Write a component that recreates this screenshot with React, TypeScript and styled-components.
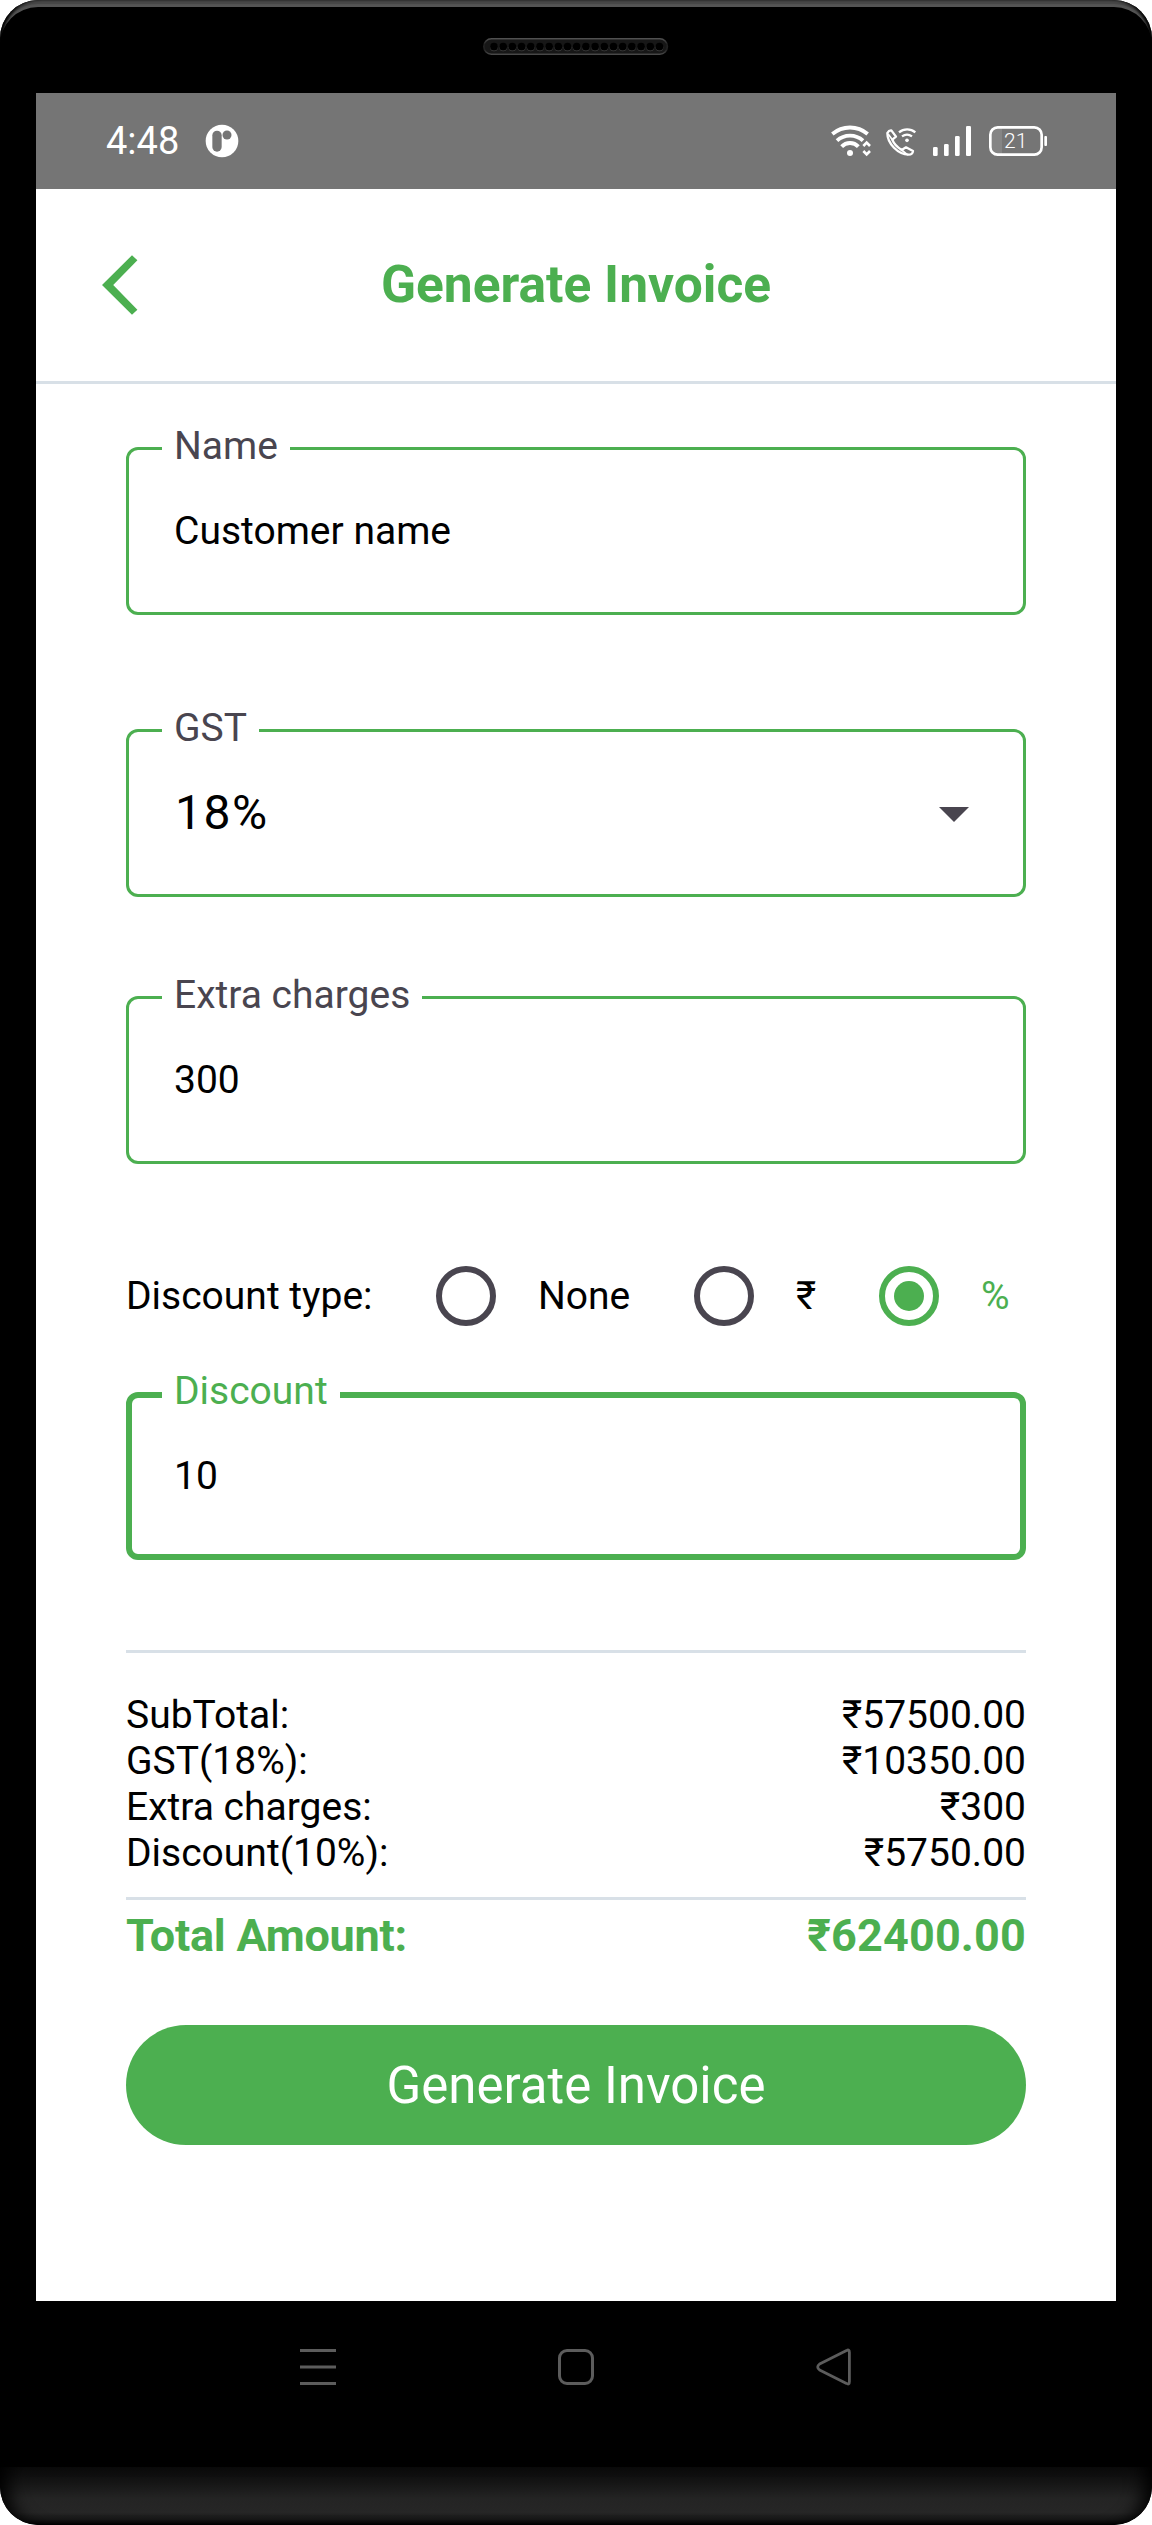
import React from "react";
import styled, { createGlobalStyle } from "styled-components";

const GREEN = "#4caf50";
const LINE = "#d8e0e7";
const MUTED = "#49454f";

const GlobalStyle = createGlobalStyle`
  body { margin: 0; background: #fff; }
  * { box-sizing: border-box; }
  button, fieldset, legend { font: inherit; margin: 0; padding: 0; }
`;

const Phone = styled.div`
  width: 1152px;
  height: 2525px;
  display: flex;
  flex-direction: column;
  background: #000;
  border-radius: 38px;
  overflow: hidden;
  font-family: Roboto, "Liberation Sans", sans-serif;
  font-size: 39px;
  line-height: 46px;
  color: #000;
`;

const TopBezel = styled.div`
  height: 93px;
  flex: none;
  display: flex;
  justify-content: center;
  padding-top: 38px;
  border-radius: 38px 38px 0 0;
  box-shadow: inset 4px 0 3px -1px #000, inset -4px 0 3px -1px #000, inset 0 4px 1px #464646, inset 0 7px 0 #545454;
`;

const Screen = styled.main`
  width: 1080px;
  height: 2208px;
  flex: none;
  margin: 0 auto;
  background: #fff;
  display: flex;
  flex-direction: column;
`;

const StatusBar = styled.div`
  height: 96px;
  flex: none;
  background: #757575;
  color: #fff;
  display: flex;
  align-items: center;
  justify-content: space-between;
  padding: 0 68px 0 70px;
`;

const StatusLeft = styled.div`
  display: flex;
  align-items: center;
  gap: 26px;
`;

const Clock = styled.span`
  font-size: 38px;
`;

const StatusIcons = styled.div`
  display: flex;
  align-items: center;
`;

const Header = styled.header`
  height: 195px;
  flex: none;
  border-bottom: 3px solid ${LINE};
  display: grid;
  grid-template-columns: 120px 1fr 120px;
  align-items: center;
`;

const BackButton = styled.button`
  border: 0;
  background: none;
  display: flex;
  padding-left: 66px;
`;

const Title = styled.h1`
  margin: 0;
  text-align: center;
  font-size: 51.5px;
  line-height: 60px;
  font-weight: 700;
  color: ${GREEN};
`;

const Form = styled.form`
  flex: 1;
  display: flex;
  flex-direction: column;
  padding: 41px 90px 0;
`;

const Field = styled.fieldset<{ $focused?: boolean; $top?: number }>`
  height: 190px;
  margin-top: ${(p) => p.$top ?? 0}px;
  min-width: 0;
  border: ${(p) => (p.$focused ? 6 : 3)}px solid ${GREEN};
  border-radius: 12px;
  padding: 0 ${(p) => (p.$focused ? 51 : 54)}px 0 ${(p) => (p.$focused ? 30 : 33)}px;
`;

const Legend = styled.legend<{ $focused?: boolean }>`
  padding: 0 12px ${(p) => (p.$focused ? 7 : 4)}px 12px;
  line-height: 43px;
  color: ${(p) => (p.$focused ? GREEN : MUTED)};
`;

const Value = styled.div<{ $large?: boolean; $focused?: boolean }>`
  height: ${(p) => (p.$focused ? 111 : 118)}px;
  padding-left: ${(p) => (p.$large ? 13 : 12)}px;
  display: flex;
  align-items: center;
  justify-content: space-between;
  font-size: ${(p) => (p.$large ? 48 : 39)}px;
  letter-spacing: ${(p) => (p.$large ? 1.5 : 0)}px;

  svg { margin-top: 3px; }
`;

const RadioRow = styled.div`
  display: grid;
  grid-template-columns: 310px 258px 185px auto;
  align-items: center;
  height: 60px;
  margin: 102px 0 44px;
`;

const Option = styled.label<{ $checked?: boolean }>`
  display: flex;
  align-items: center;
  gap: 42px;
  color: ${(p) => (p.$checked ? GREEN : "#000")};
`;

const Radio = styled.span<{ $checked?: boolean }>`
  width: 60px;
  height: 60px;
  border-radius: 50%;
  border: 6px solid ${(p) => (p.$checked ? GREEN : MUTED)};
  display: flex;
  align-items: center;
  justify-content: center;

  &::after {
    content: "";
    width: 30px;
    height: 30px;
    border-radius: 50%;
    background: ${(p) => (p.$checked ? GREEN : "transparent")};
  }
`;

const Summary = styled.dl`
  margin: 90px 0 0;
  padding: 39px 0 21px;
  border: solid ${LINE};
  border-width: 3px 0;
`;

const SummaryRow = styled.div`
  display: flex;
  justify-content: space-between;

  dt, dd { margin: 0; }
`;

const Total = styled.div`
  display: flex;
  justify-content: space-between;
  height: 125px;
  padding-top: 9px;
  font-size: 45px;
  line-height: 53px;
  font-weight: 700;
  color: ${GREEN};
`;

const TotalLabel = styled.span`
  letter-spacing: -0.25px;
`;

const TotalAmount = styled.span`
  letter-spacing: 0.15px;
`;

const Submit = styled.button`
  height: 120px;
  flex: none;
  border: 0;
  border-radius: 60px;
  background: ${GREEN};
  color: #fff;
  font-size: 51px;
  line-height: 60px;
  padding-top: 2px;
`;

const NavBar = styled.nav`
  height: 166px;
  flex: none;
  display: flex;
  align-items: center;
  justify-content: center;
  gap: 220px;
  padding-bottom: 34px;
`;

const Chin = styled.div`
  height: 58px;
  flex: none;
  border-radius: 0 0 38px 38px;
  background: linear-gradient(#0b0b0b, #141414 25%, #242424 55%, #262626 78%, #181818 90%, #000);
  box-shadow: inset 20px 0 18px -12px #000, inset -20px 0 18px -12px #000;
`;

const Speaker = () => (
  <svg width="186" height="18" viewBox="0 0 186 18">
    <defs>
      <linearGradient id="rim" x1="0" y1="0" x2="0" y2="1">
        <stop offset="0" stopColor="#505050" />
        <stop offset="0.35" stopColor="#222" />
        <stop offset="0.7" stopColor="#222" />
        <stop offset="1" stopColor="#484848" />
      </linearGradient>
    </defs>
    <rect x="0.8" y="0.8" width="183.6" height="15.4" rx="7.7" fill="#171717" stroke="url(#rim)" strokeWidth="1.6" />
    {Array.from({ length: 19 }, (_, i) => (
      <g key={i}>
        <circle cx={11 + i * 9.19} cy="9.3" r="3.9" fill="#444" />
        <circle cx={11 + i * 9.19} cy="8.6" r="3.9" fill="#000" />
      </g>
    ))}
  </svg>
);

const AppBadge = () => (
  <svg width="34" height="34" viewBox="-51 -51 102 102">
    <circle r="49" fill="#fff" />
    <rect x="-29" y="-31" width="28" height="63" rx="14" fill="#757575" />
    <circle cx="15" cy="-18" r="13.5" fill="#757575" />
  </svg>
);

/* Wi-Fi, call, signal and battery share one drawing whose units are thirds of a pixel. */
const StatusGlyphs = () => (
  <svg width="218" height="34" viewBox="90 72 654 102" fill="none" stroke="#fff">
    <g strokeWidth="11.5">
      <path d="M97 102A82 82 0 0 1 203 102" />
      <path d="M111 122A58 58 0 0 1 189 122" />
      <path d="M125 140A34 34 0 0 1 175 140" />
    </g>
    <circle cx="150" cy="159" r="9" fill="#fff" stroke="none" />
    <path d="M190 138L200 128L210 138M190 153L200 163L210 153" strokeWidth="8" />
    <g strokeWidth="7" strokeLinejoin="round" strokeLinecap="round">
      <path d="M262 99Q267 90 274 91L288 110L277 119Q283 136 305 150L318 142L339 153Q338 164 326 164C294 163 262 131 262 99Z" />
      <path d="M265 103L277 119M305 150L322 164" strokeWidth="5" />
    </g>
    <path d="M297 97A38 38 0 0 1 346 97M306 109A26 26 0 0 1 336 109" strokeWidth="7" />
    <circle cx="321" cy="121" r="5.5" fill="#fff" stroke="none" />
    <g fill="#fff" stroke="none">
      <rect x="399" y="141" width="14" height="27" rx="4" />
      <rect x="432" y="132" width="14" height="36" rx="4" />
      <rect x="465" y="108" width="14" height="60" rx="4" />
      <rect x="498" y="78" width="15" height="90" rx="4" />
      <rect x="733" y="108" width="8" height="30" rx="3" />
    </g>
    <path d="M606 82H590Q571 82 571 104V142Q571 164 590 164H606Z" fill="#858585" stroke="none" />
    <rect x="571" y="82" width="154" height="82" rx="22" strokeWidth="8" />
    <text x="647" y="144" fill="#fff" stroke="none" fontSize="63" fontWeight="300" textAnchor="middle">
      21
    </text>
  </svg>
);

const summary = [
  ["SubTotal:", "₹57500.00"],
  ["GST(18%):", "₹10350.00"],
  ["Extra charges:", "₹300"],
  ["Discount(10%):", "₹5750.00"],
];

export default function App() {
  return (
    <Phone>
      <GlobalStyle />
      <TopBezel>
        <Speaker />
      </TopBezel>
      <Screen>
        <StatusBar>
          <StatusLeft>
            <Clock>4:48</Clock>
            <AppBadge />
          </StatusLeft>
          <StatusIcons>
            <StatusGlyphs />
          </StatusIcons>
        </StatusBar>
        <Header>
          <BackButton type="button" aria-label="Back">
            <svg width="36" height="60" viewBox="0 0 36 60">
              <path d="M30 0.3L35.4 5.3L11.2 30L35.4 54.7L30 59.7L0 30Z" fill={GREEN} />
            </svg>
          </BackButton>
          <Title>Generate Invoice</Title>
        </Header>
        <Form>
          <Field>
            <Legend>Name</Legend>
            <Value>Customer name</Value>
          </Field>
          <Field $top={92}>
            <Legend>GST</Legend>
            <Value $large>
              18%
              <svg width="30" height="15" viewBox="0 0 30 15">
                <path d="M0 0H30L15 15Z" fill={MUTED} />
              </svg>
            </Value>
          </Field>
          <Field $top={77}>
            <Legend>Extra charges</Legend>
            <Value>300</Value>
          </Field>
          <RadioRow>
            <span>Discount type:</span>
            <Option>
              <Radio />
              None
            </Option>
            <Option>
              <Radio />₹
            </Option>
            <Option $checked>
              <Radio $checked />%
            </Option>
          </RadioRow>
          <Field $focused>
            <Legend $focused>Discount</Legend>
            <Value $focused>10</Value>
          </Field>
          <Summary>
            {summary.map(([label, amount]) => (
              <SummaryRow key={label}>
                <dt>{label}</dt>
                <dd>{amount}</dd>
              </SummaryRow>
            ))}
          </Summary>
          <Total>
            <TotalLabel>Total Amount:</TotalLabel>
            <TotalAmount>₹62400.00</TotalAmount>
          </Total>
          <Submit type="button">Generate Invoice</Submit>
        </Form>
      </Screen>
      <NavBar>
        <svg width="38" height="38" viewBox="0 0 38 38" stroke="#5c5c5c" strokeWidth="3">
          <path d="M1 2.5H37M1 19H37M1 35.5H37" />
        </svg>
        <svg width="38" height="38" viewBox="0 0 38 38" fill="none" stroke="#5c5c5c" strokeWidth="3">
          <rect x="2.5" y="2.5" width="33" height="33" rx="7.5" />
        </svg>
        <svg width="38" height="38" viewBox="0 0 38 38" fill="none" stroke="#5c5c5c" strokeWidth="2.8" strokeLinejoin="round">
          <path d="M31.5 2.6Q34.4 0.8 34.4 4.5V33.5Q34.4 37.2 31.5 35.4L4.6 22Q0.8 19 4.6 16Z" />
        </svg>
      </NavBar>
      <Chin />
    </Phone>
  );
}
